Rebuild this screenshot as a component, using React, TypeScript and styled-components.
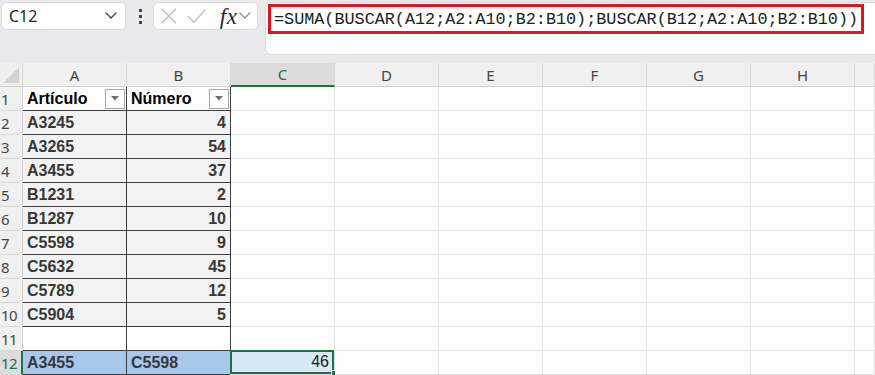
import * as React from 'react';
import styled, { createGlobalStyle, css } from 'styled-components';

const GlobalStyle = createGlobalStyle`
  html, body {
    margin: 0;
    padding: 0;
    background: #ffffff;
    overflow: hidden;
  }
  * {
    box-sizing: border-box;
  }
`;

const Page = styled.div`
  width: 875px;
  height: 375px;
  display: flex;
  flex-direction: column;
  overflow: hidden;
  font-family: 'Noto Sans', 'Liberation Sans', sans-serif;
`;

const Toolbar = styled.div`
  display: flex;
  align-items: flex-start;
  height: 63px;
  padding: 2px 0 0 1px;
  background: #e9e9ec;
`;

const NameBox = styled.div`
  display: flex;
  align-items: center;
  justify-content: space-between;
  width: 125px;
  height: 28px;
  padding: 0 8px 0 7px;
  background: #ffffff;
  border: 1px solid #dcdcdf;
  border-radius: 5px;
  font-size: 16px;
  color: #1f1f1f;
`;

const Dots = styled.div`
  display: flex;
  flex-direction: column;
  align-items: center;
  justify-content: center;
  gap: 3px;
  width: 27px;
  height: 28px;
  padding-left: 1px;
`;

const Dot = styled.span`
  width: 3px;
  height: 3px;
  background: #444444;
`;

const FunctionBox = styled.div`
  display: flex;
  align-items: center;
  width: 105px;
  height: 28px;
  padding: 0 6px 0 6px;
  gap: 10px;
  background: #ffffff;
  border: 1px solid #dcdcdf;
  border-radius: 5px;
`;

const Fx = styled.span`
  font-family: 'Liberation Serif', 'DejaVu Serif', serif;
  font-style: italic;
  font-size: 23px;
  color: #262626;
  margin-left: 3px;
  margin-right: -8px;
  line-height: 1;
  letter-spacing: 0.5px;
`;

const FormulaBar = styled.div`
  flex: 1;
  height: 53px;
  margin-left: 7px;
  margin-right: -12px;
  padding: 1px 2px;
  background: #ffffff;
  border: 1px solid #dcdcdf;
  border-radius: 6px;
`;

const FormulaBox = styled.div`
  display: flex;
  align-items: center;
  width: 596px;
  height: 30px;
  padding: 0 3px;
  border: 3px solid #e3141f;
  font-family: 'Liberation Mono', 'DejaVu Sans Mono', monospace;
  font-size: 16.8px;
  color: #202020;
  white-space: nowrap;
`;

const Sheet = styled.div`
  display: grid;
  grid-template-columns: 23px repeat(8, 104px) 1fr;
  grid-auto-rows: 24px;
  font-family: 'Liberation Sans', Arial, sans-serif;
`;

const Corner = styled.div`
  background: #efefef;
  border-right: 1px solid #d9d9d9;
  border-bottom: 1px solid #d0d0d0;
  display: flex;
  align-items: flex-end;
  justify-content: flex-end;
  padding: 0 3px 3px 0;
`;

const ColHead = styled.div<{ $active?: boolean }>`
  display: flex;
  align-items: center;
  justify-content: center;
  background: ${(p) => (p.$active ? '#dcdcdc' : '#f0f0f0')};
  border-right: 1px solid #d9d9d9;
  border-bottom: ${(p) => (p.$active ? '2px solid #1e7145' : '1px solid #d0d0d0')};
  font-family: 'Noto Sans', 'Open Sans', sans-serif;
  font-size: 15px;
  color: ${(p) => (p.$active ? '#1e7145' : '#444444')};
`;

const RowHead = styled.div<{ $active?: boolean }>`
  display: flex;
  align-items: center;
  padding-left: 1px;
  background: ${(p) => (p.$active ? '#dcdcdc' : '#f0f0f0')};
  border-right: ${(p) => (p.$active ? '2px solid #1e7145' : '1px solid #d0d0d0')};
  border-bottom: 1px solid #d9d9d9;
  font-family: 'Noto Sans', 'Open Sans', sans-serif;
  font-size: 15px;
  letter-spacing: -0.5px;
  color: ${(p) => (p.$active ? '#1e7145' : '#444444')};
`;

type CellProps = {
  $align?: 'left' | 'right';
  $fill?: string;
  $boxed?: boolean;
  $header?: boolean;
  $selected?: boolean;
};

const Cell = styled.div<CellProps>`
  position: relative;
  display: flex;
  align-items: center;
  justify-content: ${(p) => (p.$align === 'right' ? 'flex-end' : 'flex-start')};
  gap: 4px;
  padding: 0 4px 0 4px;
  background: ${(p) => p.$fill || '#ffffff'};
  border-right: 1px solid #e1e1e1;
  border-bottom: 1px solid #e1e1e1;
  font-size: 16px;
  font-weight: bold;
  color: ${(p) => (p.$header ? '#000000' : '#383838')};
  white-space: nowrap;
  ${(p) =>
    p.$boxed &&
    css`
      border-right-color: #3c3c3c;
      border-bottom-color: #3c3c3c;
    `}
  ${(p) =>
    p.$selected &&
    css`
      font-weight: normal;
      color: #1a1a1a;
      font-size: 16px;
      box-shadow: inset 0 0 0 2px #1e7145;
      margin: -1px 0 0 -1px;
      padding-right: 5px;
    `}
`;

const CellText = styled.span`
  flex: 1;
`;

const FilterButton = styled.div`
  display: flex;
  align-items: center;
  justify-content: center;
  width: 20px;
  height: 20px;
  margin-right: -3px;
  background: #ffffff;
  border: 1px solid #a6a6a6;
`;

const FillHandle = styled.span`
  position: absolute;
  right: -4px;
  bottom: -3px;
  width: 7px;
  height: 7px;
  background: #1e7145;
  border: 1px solid #ffffff;
`;

const Chevron: React.FC<{ size?: number; color?: string }> = ({ size = 12, color = '#3a3a3a' }) => (
  <svg width={size} height={size * 0.6} viewBox="0 0 10 6" fill="none">
    <polyline points="0.5,0.5 5,5 9.5,0.5" stroke={color} strokeWidth="1.1" />
  </svg>
);

const CrossIcon = () => (
  <svg width="18" height="18" viewBox="0 0 18 18" fill="none">
    <path d="M1.5 1.5 L16.5 16.5 M16.5 1.5 L1.5 16.5" stroke="#bdbdbd" strokeWidth="1.3" />
  </svg>
);

const CheckIcon = () => (
  <svg width="20" height="16" viewBox="0 0 20 16" fill="none">
    <polyline points="1,8 7,14.5 19,1.5" stroke="#bdbdbd" strokeWidth="1.3" />
  </svg>
);

const CornerTriangle = () => (
  <svg width="16" height="16" viewBox="0 0 16 16">
    <polygon points="16,0 16,16 0,16" fill="#d3d3d3" />
  </svg>
);

const FilterArrow = () => (
  <svg width="8" height="5" viewBox="0 0 8 5">
    <polygon points="0,0 8,0 4,4.5" fill="#6e6e6e" />
  </svg>
);

const columns = ['A', 'B', 'C', 'D', 'E', 'F', 'G', 'H', ''];

const data: [string, number][] = [
  ['A3245', 4],
  ['A3265', 54],
  ['A3455', 37],
  ['B1231', 2],
  ['B1287', 10],
  ['C5598', 9],
  ['C5632', 45],
  ['C5789', 12],
  ['C5904', 5],
];

const EmptyCells: React.FC<{ count: number }> = ({ count }) => (
  <>
    {Array.from({ length: count }).map((_, i) => (
      <Cell key={i} />
    ))}
  </>
);

const App: React.FC = () => {
  return (
    <Page>
      <GlobalStyle />
      <Toolbar>
        <NameBox>
          <span>C12</span>
          <Chevron />
        </NameBox>
        <Dots>
          <Dot />
          <Dot />
          <Dot />
        </Dots>
        <FunctionBox>
          <CrossIcon />
          <CheckIcon />
          <Fx>fx</Fx>
          <Chevron size={12} color="#8a8a8a" />
        </FunctionBox>
        <FormulaBar>
          <FormulaBox>=SUMA(BUSCAR(A12;A2:A10;B2:B10);BUSCAR(B12;A2:A10;B2:B10))</FormulaBox>
        </FormulaBar>
      </Toolbar>

      <Sheet>
        <Corner>
          <CornerTriangle />
        </Corner>
        {columns.map((c, i) => (
          <ColHead key={i} $active={c === 'C'}>
            {c}
          </ColHead>
        ))}

        <RowHead>1</RowHead>
        <Cell $boxed $header>
          <CellText>Artículo</CellText>
          <FilterButton>
            <FilterArrow />
          </FilterButton>
        </Cell>
        <Cell $boxed $header>
          <CellText>Número</CellText>
          <FilterButton>
            <FilterArrow />
          </FilterButton>
        </Cell>
        <EmptyCells count={7} />

        {data.map(([code, num], i) => (
          <React.Fragment key={code}>
            <RowHead>{i + 2}</RowHead>
            <Cell $boxed $fill="#f2f2f2">
              {code}
            </Cell>
            <Cell $boxed $fill="#f2f2f2" $align="right">
              {num}
            </Cell>
            <EmptyCells count={7} />
          </React.Fragment>
        ))}

        <RowHead>11</RowHead>
        <Cell $boxed />
        <Cell $boxed />
        <EmptyCells count={7} />

        <RowHead $active>12</RowHead>
        <Cell $boxed $fill="#a7c8ec">
          A3455
        </Cell>
        <Cell $boxed $fill="#a7c8ec">
          C5598
        </Cell>
        <Cell $selected $fill="#dae9f8" $align="right">
          46
          <FillHandle />
        </Cell>
        <EmptyCells count={6} />
      </Sheet>
    </Page>
  );
};

export default App;
